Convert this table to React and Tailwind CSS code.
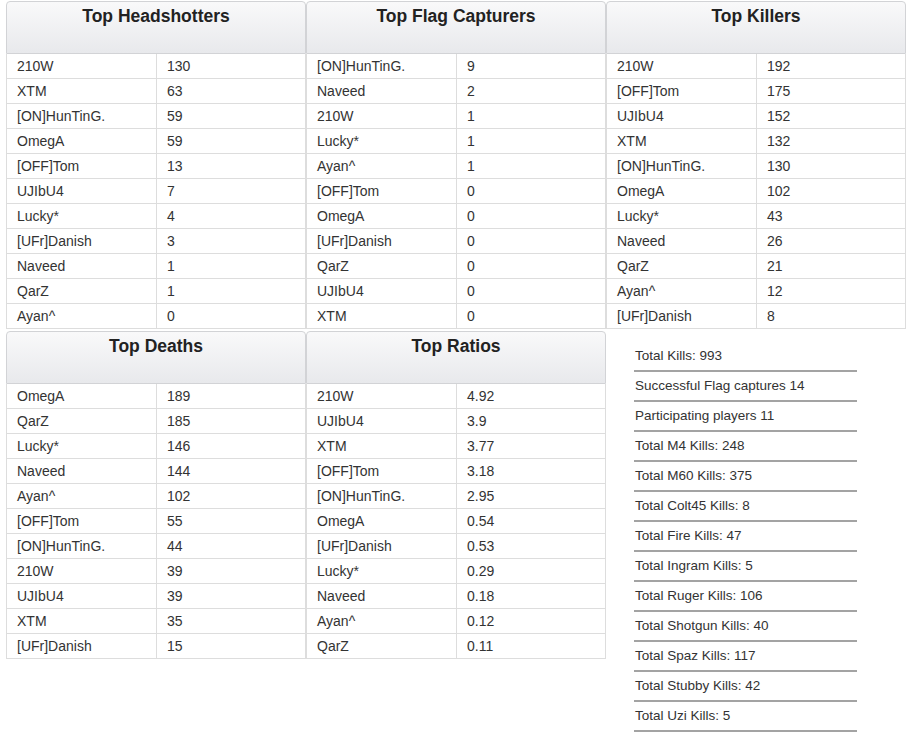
const headshotters = [
  ["210W", "130"], ["XTM", "63"], ["[ON]HunTinG.", "59"], ["OmegA", "59"], ["[OFF]Tom", "13"],
  ["UJIbU4", "7"], ["Lucky*", "4"], ["[UFr]Danish", "3"], ["Naveed", "1"], ["QarZ", "1"], ["Ayan^", "0"],
];
const flags = [
  ["[ON]HunTinG.", "9"], ["Naveed", "2"], ["210W", "1"], ["Lucky*", "1"], ["Ayan^", "1"],
  ["[OFF]Tom", "0"], ["OmegA", "0"], ["[UFr]Danish", "0"], ["QarZ", "0"], ["UJIbU4", "0"], ["XTM", "0"],
];
const killers = [
  ["210W", "192"], ["[OFF]Tom", "175"], ["UJIbU4", "152"], ["XTM", "132"], ["[ON]HunTinG.", "130"],
  ["OmegA", "102"], ["Lucky*", "43"], ["Naveed", "26"], ["QarZ", "21"], ["Ayan^", "12"], ["[UFr]Danish", "8"],
];
const deaths = [
  ["OmegA", "189"], ["QarZ", "185"], ["Lucky*", "146"], ["Naveed", "144"], ["Ayan^", "102"],
  ["[OFF]Tom", "55"], ["[ON]HunTinG.", "44"], ["210W", "39"], ["UJIbU4", "39"], ["XTM", "35"], ["[UFr]Danish", "15"],
];
const ratios = [
  ["210W", "4.92"], ["UJIbU4", "3.9"], ["XTM", "3.77"], ["[OFF]Tom", "3.18"], ["[ON]HunTinG.", "2.95"],
  ["OmegA", "0.54"], ["[UFr]Danish", "0.53"], ["Lucky*", "0.29"], ["Naveed", "0.18"], ["Ayan^", "0.12"], ["QarZ", "0.11"],
];

const totals = [
  "Total Kills: 993",
  "Successful Flag captures 14",
  "Participating players 11",
  "Total M4 Kills: 248",
  "Total M60 Kills: 375",
  "Total Colt45 Kills: 8",
  "Total Fire Kills: 47",
  "Total Ingram Kills: 5",
  "Total Ruger Kills: 106",
  "Total Shotgun Kills: 40",
  "Total Spaz Kills: 117",
  "Total Stubby Kills: 42",
  "Total Uzi Kills: 5",
];

function StatTable({ title, rows }) {
  return (
    <div className="w-[300px] shrink-0">
      <div className="h-[53px] box-border border border-[#d2d3d6] rounded-t-[4px] bg-linear-to-b from-[#f9f9fa] to-[#e8e9ec] pt-[2px] text-center text-[17.5px] leading-[24px] font-bold text-[#222]">
        {title}
      </div>
      {rows.map(([name, value], i) => (
        <div key={i} className="flex h-[25px] border-b border-[#dddddd] text-[14px] text-[#333]">
          <div className="w-[151px] box-border border-l border-r border-[#dddddd] pl-[10px] flex items-center">
            {name}
          </div>
          <div className="flex-1 box-border border-r border-[#dddddd] pl-[10px] flex items-center">
            {value}
          </div>
        </div>
      ))}
    </div>
  );
}

export default function App() {
  return (
    <div className="w-[907px] bg-white pl-[6px] pt-px font-['Liberation_Sans',Arial,sans-serif]">
      <div className="flex flex-wrap gap-y-[2px]">
        <StatTable title="Top Headshotters" rows={headshotters} />
        <StatTable title="Top Flag Capturers" rows={flags} />
        <StatTable title="Top Killers" rows={killers} />
        <StatTable title="Top Deaths" rows={deaths} />
        <StatTable title="Top Ratios" rows={ratios} />
        <div className="w-[300px] pl-[28px] pt-[11px] pb-[14px]">
          {totals.map((t, i) => (
            <div key={i} className="w-[223px] h-[30px] box-border border-b-2 border-[#a3a3a3] flex items-center pl-px text-[13.5px] text-[#333]">
              {t}
            </div>
          ))}
        </div>
      </div>
    </div>
  );
}
